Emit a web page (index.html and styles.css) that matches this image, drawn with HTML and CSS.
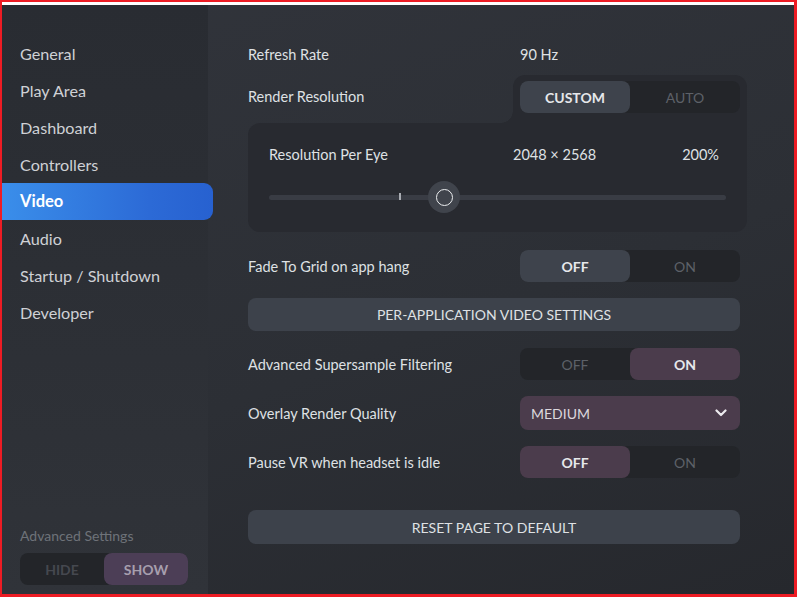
FILE: index.html
```html
<!DOCTYPE html>
<html lang="en">
<head>
    <meta charset="UTF-8">
    <meta name="viewport" content="width=device-width, initial-scale=1.0">
    <title>Settings - Video</title>
    <link rel="stylesheet" href="styles.css">
</head>
<body>
    <div class="screen">
        <div class="app">
            <aside class="sidebar">
                <ul class="nav">
                    <li>General</li>
                    <li>Play Area</li>
                    <li>Dashboard</li>
                    <li>Controllers</li>
                    <li class="active">Video</li>
                    <li>Audio</li>
                    <li>Startup / Shutdown</li>
                    <li>Developer</li>
                </ul>
                <div class="advanced">
                    <div class="advanced-label">Advanced Settings</div>
                    <div class="toggle toggle-small">
                        <span class="opt">HIDE</span>
                        <span class="opt selected violet">SHOW</span>
                    </div>
                </div>
            </aside>

            <main class="content">
                <div class="row row-info">
                    <span class="label">Refresh Rate</span>
                    <span class="value">90 Hz</span>
                </div>

                <div class="row row-res">
                    <span class="label">Render Resolution</span>
                    <div class="tab">
                        <div class="toggle">
                            <span class="opt selected">CUSTOM</span>
                            <span class="opt">AUTO</span>
                        </div>
                    </div>
                </div>

                <div class="panel">
                    <div class="panel-row">
                        <span class="label">Resolution Per Eye</span>
                        <span class="value">2048 &times; 2568</span>
                        <span class="pct">200%</span>
                    </div>
                    <div class="slider">
                        <div class="track"></div>
                        <div class="tick"></div>
                        <div class="knob"><div class="knob-ring"></div></div>
                    </div>
                </div>

                <div class="row row-fade">
                    <span class="label">Fade To Grid on app hang</span>
                    <div class="toggle">
                        <span class="opt selected">OFF</span>
                        <span class="opt">ON</span>
                    </div>
                </div>

                <button class="btn btn-perapp">PER-APPLICATION VIDEO SETTINGS</button>

                <div class="row row-super">
                    <span class="label">Advanced Supersample Filtering</span>
                    <div class="toggle">
                        <span class="opt">OFF</span>
                        <span class="opt selected plum">ON</span>
                    </div>
                </div>

                <div class="row row-quality">
                    <span class="label">Overlay Render Quality</span>
                    <div class="dropdown">
                        <span>MEDIUM</span>
                        <svg class="chevron" width="12" height="8" viewBox="0 0 12 8">
                            <path d="M1.5 1.5 L6 6 L10.5 1.5" fill="none" stroke="#eceaee" stroke-width="2.2" stroke-linecap="round" stroke-linejoin="round"/>
                        </svg>
                    </div>
                </div>

                <div class="row row-pause">
                    <span class="label">Pause VR when headset is idle</span>
                    <div class="toggle">
                        <span class="opt selected plum">OFF</span>
                        <span class="opt">ON</span>
                    </div>
                </div>

                <button class="btn btn-reset">RESET PAGE TO DEFAULT</button>
            </main>
        </div>
    </div>
</body>
</html>
```

FILE: styles.css
```css
/* reset */
* {
    margin: 0;
    padding: 0;
    box-sizing: border-box;
}
body {
    font-family: 'Lato', 'Liberation Sans', sans-serif;
    background-color: #fff;
    width: 797px;
    height: 597px;
    overflow: hidden;
}

/* red capture frame */
.screen {
    width: 797px;
    height: 597px;
    border-style: solid;
    border-color: #ed1c24;
    border-width: 2px 3px 3px 2px;
    padding-top: 3px;
    background-color: #fff;
}
.app {
    display: flex;
    height: 589px;
    background: linear-gradient(160deg, #31343b 0%, #2c2f35 55%, #26282d 100%);
}

/* sidebar */
.sidebar {
    width: 206px;
    flex-shrink: 0;
    display: flex;
    flex-direction: column;
    background: linear-gradient(180deg, #292c32 0%, #2d3036 60%, #303339 100%);
    position: relative;
    z-index: 1;
}
.nav {
    list-style: none;
    padding-top: 30px;
}
.nav li {
    height: 37px;
    line-height: 37px;
    padding-left: 18px;
    font-size: 16.2px;
    color: #cfd1d5;
}
.nav li.active {
    width: 211px;
    color: #fff;
    font-weight: bold;
    font-size: 16.5px;
    border-radius: 0 9px 9px 0;
    background: linear-gradient(90deg, #3a8eea 0%, #2c6ad6 70%, #2761d0 100%);
}
.advanced {
    margin-top: auto;
    padding: 0 0 9px 18px;
}
.advanced-label {
    font-size: 14px;
    color: #6e7279;
    margin-bottom: 9px;
}

/* toggles */
.toggle {
    display: flex;
    width: 220px;
    height: 32px;
    border-radius: 8px;
    background-color: #232529;
}
.toggle .opt {
    flex: 1;
    display: flex;
    align-items: center;
    justify-content: center;
    border-radius: 8px;
    font-size: 14px;
    color: #5d6168;
}
.toggle .opt.selected {
    background-color: #3e434c;
    color: #e6e8eb;
    font-weight: bold;
}
.toggle .opt.plum {
    background-color: #4b3c4c;
}
.toggle .opt.violet {
    background-color: #4c3e56;
    color: #a79fae;
}
.toggle-small {
    width: 168px;
}
.toggle-small .opt {
    color: #45484f;
    font-weight: bold;
}

/* content */
.content {
    flex: 1;
    padding: 33px 0 0 40px;
}
.row {
    display: grid;
    grid-template-columns: 272px 220px;
    align-items: center;
}
.label {
    font-size: 14.5px;
    color: #dfe1e4;
}
.value {
    font-size: 14.5px;
    color: #dfe1e4;
}
.row-info {
    height: 32px;
}
.row-res {
    margin-top: 5px;
    align-items: start;
}
.row-res .label {
    line-height: 32px;
    padding-top: 6px;
}
.tab {
    position: relative;
    margin-left: -7px;
    width: 234px;
    padding: 6px 7px 10px;
    background-color: #282a30;
    border-radius: 12px 12px 0 0;
}
.tab::before {
    content: '';
    position: absolute;
    left: -12px;
    bottom: 0;
    width: 12px;
    height: 12px;
    background: radial-gradient(circle at 0 0, transparent 11.5px, #282a30 12px);
}

/* resolution panel */
.panel {
    width: 499px;
    height: 109px;
    padding: 21px 21px 0;
    background-color: #282a30;
    border-radius: 12px 0 12px 12px;
}
.panel-row {
    display: grid;
    grid-template-columns: 244px 1fr auto;
    line-height: 22px;
    padding-right: 7px;
}
.pct {
    font-size: 14.5px;
    color: #dfe1e4;
}
.slider {
    position: relative;
    height: 32px;
    margin-top: 15px;
}
.track {
    position: absolute;
    left: 0;
    right: 0;
    top: 14px;
    height: 5px;
    border-radius: 3px;
    background-color: #393c44;
}
.tick {
    position: absolute;
    left: 130px;
    top: 12px;
    width: 2px;
    height: 7px;
    background-color: #a9acb2;
}
.knob {
    position: absolute;
    left: 159px;
    top: 0;
    width: 32px;
    height: 32px;
    border-radius: 50%;
    background-color: #40444c;
    display: flex;
    align-items: center;
    justify-content: center;
}
.knob-ring {
    width: 17px;
    height: 17px;
    border-radius: 50%;
    border: 1.5px solid #eceef0;
}

.row-fade {
    margin-top: 18px;
}

/* buttons */
.btn {
    display: block;
    width: 492px;
    border: none;
    border-radius: 8px;
    background-color: #3d424b;
    color: #dfe1e4;
    font-family: inherit;
    font-size: 14px;
}
.btn-perapp {
    height: 33px;
    margin-top: 16px;
}
.row-super {
    margin-top: 17px;
}
.row-quality {
    margin-top: 16px;
}
.dropdown {
    height: 34px;
    border-radius: 8px;
    background-color: #4b3c4c;
    display: flex;
    align-items: center;
    justify-content: space-between;
    padding: 0 13px 0 11px;
    font-size: 14px;
    color: #dcd7de;
}
.row-pause {
    margin-top: 16px;
}
.btn-reset {
    height: 34px;
    margin-top: 32px;
}
```
